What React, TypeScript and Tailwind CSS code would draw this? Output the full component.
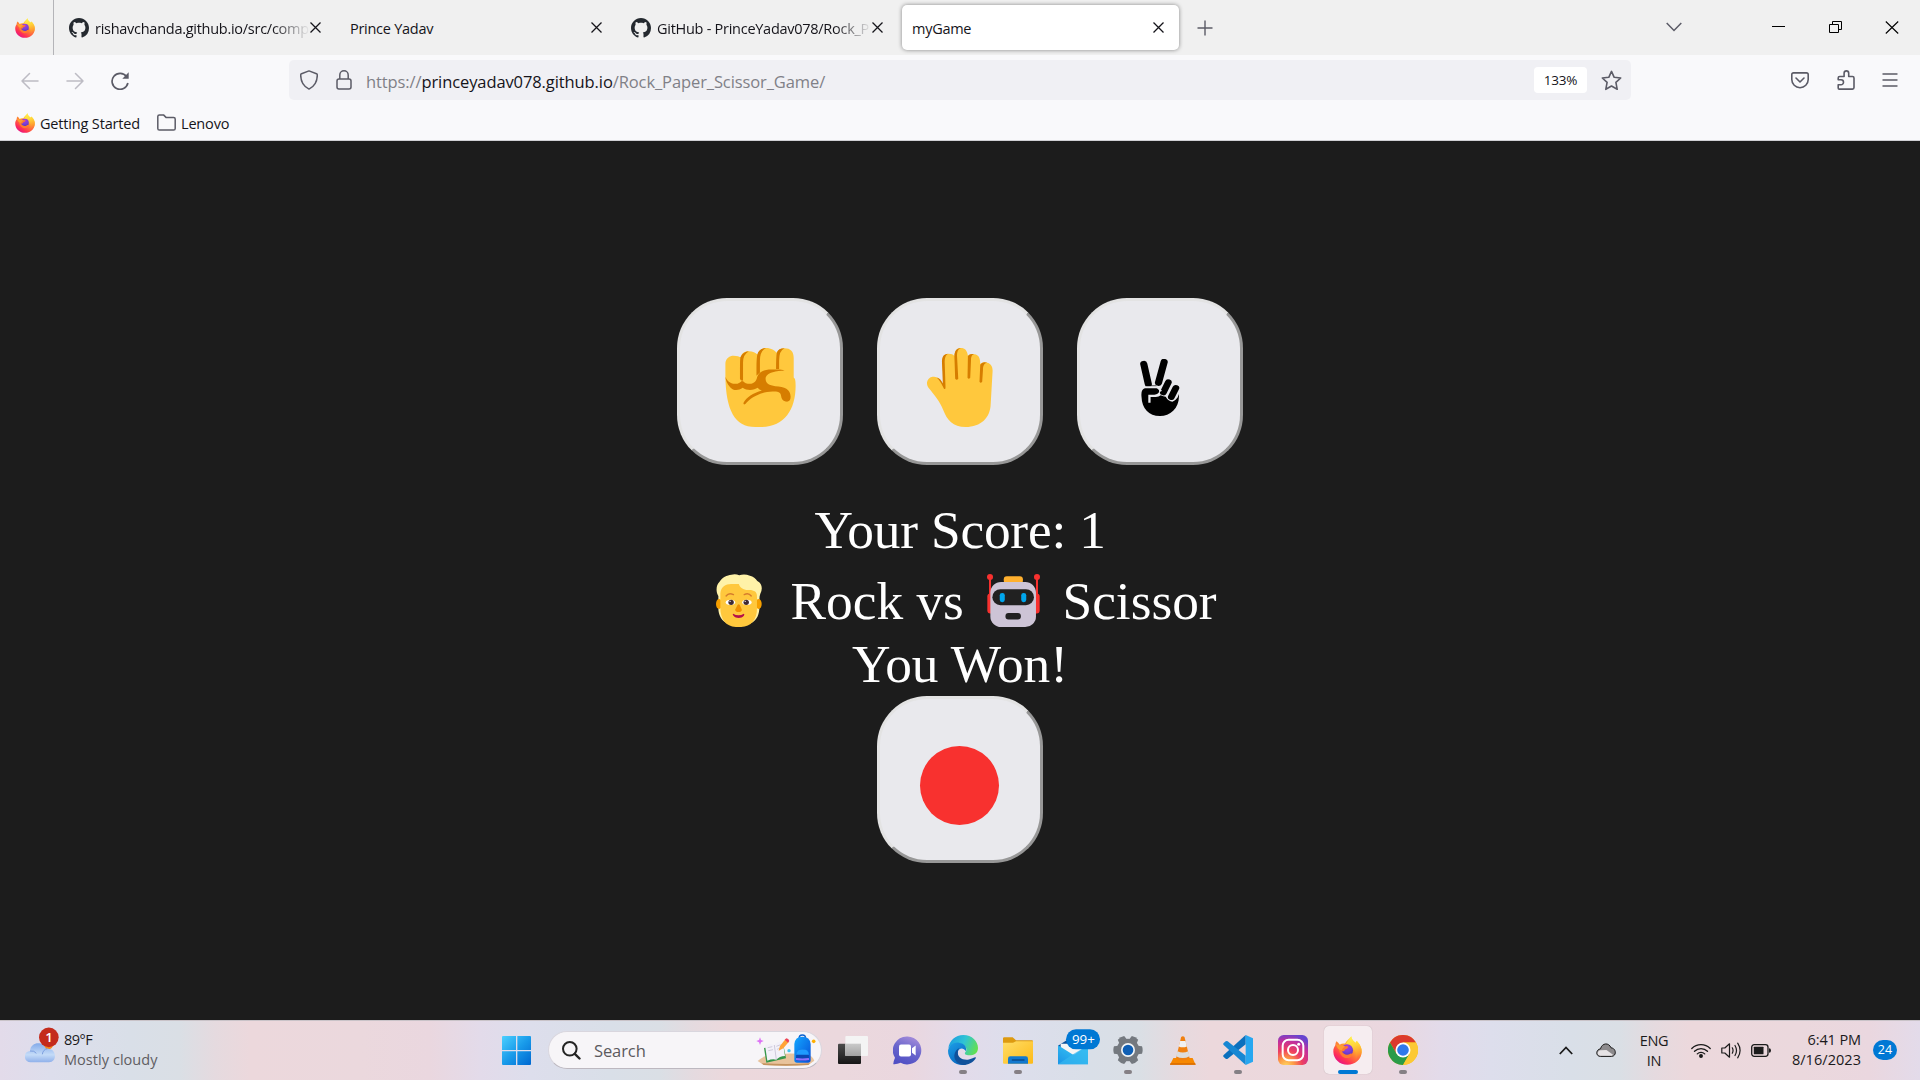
import React from "react";

const GITHUB_PATH =
  "M8 0C3.58 0 0 3.58 0 8c0 3.54 2.29 6.53 5.47 7.59.4.07.55-.17.55-.38 0-.19-.01-.82-.01-1.49-2.01.37-2.53-.49-2.69-.94-.09-.23-.48-.94-.82-1.13-.28-.15-.68-.52-.01-.53.63-.01 1.08.58 1.23.82.72 1.21 1.87.87 2.33.66.07-.52.28-.87.51-1.07-1.78-.2-3.64-.89-3.64-3.95 0-.87.31-1.59.82-2.15-.08-.2-.36-1.02.08-2.12 0 0 .67-.21 2.2.82.64-.18 1.32-.27 2-.27s1.36.09 2 .27c1.53-1.04 2.2-.82 2.2-.82.44 1.1.16 1.92.08 2.12.51.56.82 1.27.82 2.15 0 3.07-1.87 3.75-3.65 3.95.29.25.54.73.54 1.48 0 1.07-.01 1.93-.01 2.2 0 .21.15.46.55.38A8.01 8.01 0 0 0 16 8c0-4.42-3.58-8-8-8z";

function GithubIcon() {
  return (
    <svg className="h-5 w-5 shrink-0" viewBox="0 0 16 16" fill="#24292f">
      <path d={GITHUB_PATH} />
    </svg>
  );
}

function FirefoxIcon({ className }: { className: string }) {
  return (
    <svg className={className} viewBox="0 0 84 84">
      <defs>
        <linearGradient id="fxBody" x1="0.8" y1="0.1" x2="0.2" y2="0.95">
          <stop offset="0" stopColor="#fff44f" />
          <stop offset="0.3" stopColor="#ffb52c" />
          <stop offset="0.55" stopColor="#ff7139" />
          <stop offset="0.8" stopColor="#ff2f55" />
          <stop offset="1" stopColor="#e31587" />
        </linearGradient>
        <radialGradient id="fxGlobe" cx="0.5" cy="0.2" r="0.9">
          <stop offset="0" stopColor="#b13bd8" />
          <stop offset="0.5" stopColor="#7b3fd8" />
          <stop offset="1" stopColor="#4a2fb0" />
        </radialGradient>
        <linearGradient id="fxFlame" x1="0.3" y1="0" x2="0.5" y2="1">
          <stop offset="0" stopColor="#fff44f" />
          <stop offset="0.4" stopColor="#ffd338" />
          <stop offset="0.75" stopColor="#ff9a2f" />
          <stop offset="1" stopColor="#ff5a4a" />
        </linearGradient>
      </defs>
      <path
        d="M10 15C14 17 17 21 19 25C24 22 30 21 35 22C39 14 47 8 53 1C53 10 59 15 66 20C66 16 69 14 71 17C80 27 84 37 83 47C81 69 64 83 42 83C19 83 2 67 1 46C0 36 5 30 7 26C7 21 8 18 10 15Z"
        fill="url(#fxBody)"
      />
      <path
        d="M53 1C53 10 59 15 66 20C66 16 69 14 71 17C80 27 84 37 83 47C82 59 75 69 66 74C70 62 70 50 62 41C55 34 42 30 38 22C43 14 50 9 53 1Z"
        fill="url(#fxFlame)"
      />
      <circle cx="41" cy="41" r="17" fill="url(#fxGlobe)" />
      <path
        d="M18 31C23 27 29 28 34 31C38 28 42 29 44 32C43 37 37 37 34 40C34 45 29 44 26 45C30 53 40 57 49 52C54 49 58 52 55 57C48 67 30 66 23 54C17 45 15 37 18 31Z"
        fill="#ff7a2f"
      />
      <path d="M8 24C16 27 26 24 36 31C31 32 27 36 26 41C18 42 12 36 8 24Z" fill="#ff9d33" />
    </svg>
  );
}

function CloseX() {
  return (
    <svg className="h-[11px] w-[11px]" viewBox="0 0 11 11" fill="none" stroke="#15141a" strokeWidth="1.3">
      <path d="M.5 .5L10.5 10.5M10.5 .5L.5 10.5" />
    </svg>
  );
}

type TabProps = { title: string; icon?: boolean; active?: boolean };

function Tab({ title, icon, active }: TabProps) {
  return (
    <div
      className={
        "flex h-[45px] w-[277px] shrink-0 items-center rounded-[5px] pl-[10px] pr-[15px] " +
        (active ? "bg-white shadow-[0_0_4px_rgba(0,0,0,0.45)]" : "")
      }
    >
      {icon && (
        <span className="mr-[6px] flex">
          <GithubIcon />
        </span>
      )}
      <div
        className={
          "min-w-0 flex-1 whitespace-nowrap pt-[3px] text-[14.5px] leading-6 tracking-[-0.27px] text-[#15141a] " +
          (icon ? "[mask-image:linear-gradient(to_left,transparent,black_38px)]" : "")
        }
      >
        {title}
      </div>
      <CloseX />
    </div>
  );
}

function TitleBar() {
  return (
    <div className="flex h-[55px] bg-[#f0f0f0]">
      <div className="flex w-[54px] shrink-0 items-center border-r border-[#b4b4b8] pl-[15px]">
        <FirefoxIcon className="h-5 w-5" />
      </div>
      <div className="flex gap-1 pl-[5px] pt-[5px]">
        <Tab title="rishavchanda.github.io/src/comp" icon />
        <Tab title="Prince Yadav" />
        <Tab title="GitHub - PrinceYadav078/Rock_P" icon />
        <Tab title="myGame" active />
      </div>
      <svg className="ml-[18px] mt-5 h-4 w-4" viewBox="0 0 16 16" stroke="#5b5b66" strokeWidth="1.4">
        <path d="M8 .5V15.500M.5 8H15.500" />
      </svg>
      <div className="flex-1" />
      <svg className="mt-[22px] h-[10px] w-4" viewBox="0 0 16 10" fill="none" stroke="#5b5b66" strokeWidth="1.5">
        <path d="M.7 1L8 8.500L15.300 1" />
      </svg>
      <svg className="ml-[90px] mt-5 h-[13px] w-[13px]" viewBox="0 0 13 13" stroke="#000" strokeWidth="1">
        <path d="M0 6.500H13" />
      </svg>
      <svg className="ml-[44px] mt-[21px] h-[12px] w-[13px]" viewBox="0 0 13 12" fill="none" stroke="#000" strokeWidth="1">
        <path d="M.5 3.500H9.500V11.500H.5ZM3.500 3V.5H12.500V8.500H9.500" />
      </svg>
      <svg className="ml-[43px] mr-[21px] mt-[21px] h-[13px] w-[14px]" viewBox="0 0 14 13" fill="none" stroke="#000" strokeWidth="1.1">
        <path d="M.8 .5L13.200 12.500M13.200 .5L.8 12.500" />
      </svg>
    </div>
  );
}

function NavBar() {
  return (
    <div className="flex h-[50px] bg-[#f9f9fb]">
      <div className="flex h-[50px] w-[289px] shrink-0 items-center pl-[21px] pt-px">
        <svg className="h-[18px] w-[18px]" viewBox="0 0 18 18" fill="none" stroke="#bdbcc4" strokeWidth="1.5" strokeLinecap="round" strokeLinejoin="round">
          <path d="M8.500 1.500L1 9L8.500 16.500M1 9H17" />
        </svg>
        <svg className="ml-[27px] h-[18px] w-[18px]" viewBox="0 0 18 18" fill="none" stroke="#bdbcc4" strokeWidth="1.5" strokeLinecap="round" strokeLinejoin="round">
          <path d="M9.500 1.500L17 9L9.500 16.500M17 9H1" />
        </svg>
        <svg className="ml-[27px] h-[18px] w-[18px]" viewBox="0 0 18 18" fill="none" stroke="#5b5b66" strokeWidth="1.7">
          <path d="M16.900 11A8 8 0 1 1 15.500 4.500" />
          <path d="M17.700 .3V6.700H11.300Z" fill="#5b5b66" stroke="none" />
        </svg>
      </div>
      <div className="mt-[5px] flex h-10 w-[1342px] items-center rounded-[5px] bg-[#f0f0f4] pl-[11px] pr-[9px]">
        <svg className="h-5 w-[18px]" viewBox="0 0 18 20" fill="none" stroke="#5b5b66" strokeWidth="1.5" strokeLinejoin="round">
          <path d="M9 .9L16.500 3.700C17.100 4 17.300 4.300 17.300 5C17.300 12 14 16.700 9 19.100C4 16.700 .7 12 .7 5C.7 4.300 .9 4 1.500 3.700Z" />
        </svg>
        <svg className="ml-[18px] h-5 w-4" viewBox="0 0 16 20" fill="none" stroke="#5b5b66" strokeWidth="1.5">
          <rect x="1" y="9" width="14" height="10" rx="2" />
          <path d="M3.800 9V5A4.200 4.200 0 0 1 12.200 5V9" />
        </svg>
        <div className="ml-[14px] mt-[3px] whitespace-nowrap text-[16.5px] leading-6 tracking-[-0.1px] text-[#808087]">
          https://<span className="text-[#15141a]">princeyadav078.github.io</span>/Rock_Paper_Scissor_Game/
        </div>
        <div className="flex-1" />
        <div className="flex h-[26px] w-[53px] items-center justify-center rounded bg-white pt-px text-[13.500px] tracking-[-0.15px] text-[#15141a]">
          133%
        </div>
        <svg className="ml-[14px] h-[21px] w-[21px]" viewBox="0 0 21 21" fill="none" stroke="#5b5b66" strokeWidth="1.6" strokeLinejoin="round">
          <path d="M10.500 1.400L13.200 7.300L19.700 8L14.900 12.300L16.200 19.300L10.500 16L4.800 19.300L6.100 12.300L1.300 8L7.800 7.300Z" />
        </svg>
      </div>
      <div className="flex flex-1 items-center justify-end pr-[22px]">
        <svg className="h-[17px] w-[18px]" viewBox="0 0 18 17" fill="none" stroke="#5b5b66" strokeWidth="1.6" strokeLinecap="round" strokeLinejoin="round">
          <path d="M2.500 .9H15.500C16.600 .9 17.200 1.500 17.200 2.600V7.500A8.200 8.200 0 0 1 .8 7.500V2.600C.8 1.500 1.400 .9 2.500 .9ZM5 6L9 10L13 6" />
        </svg>
        <svg className="ml-[28px] h-5 w-[18px]" viewBox="0 0 18 20" fill="none" stroke="#5b5b66" strokeWidth="1.6" strokeLinejoin="round">
          <path d="M2.200 19.100H15.500Q17 19.100 17 17.600V8Q17 6.500 15.500 6.500H11.700V3.200A2.300 2.300 0 0 0 7.100 3.200V6.500H2.700Q1.200 6.500 1.200 8V9.700H4A2.500 2.500 0 0 1 4 14.700H1.200V18Q1.200 19.100 2.200 19.100Z" />
        </svg>
        <svg className="ml-[27px] h-[14px] w-4" viewBox="0 0 16 14" stroke="#5b5b66" strokeWidth="1.4" strokeLinecap="round">
          <path d="M1 1H15M1 7H15M1 13H15" />
        </svg>
      </div>
    </div>
  );
}

function BookmarksBar() {
  return (
    <div className="flex h-9 items-center border-b border-[#cfcfd3] bg-[#f9f9fb] pl-[15px] text-[14.5px] tracking-[-0.17px] text-[#15141a]">
      <FirefoxIcon className="h-5 w-5" />
      <span className="ml-[5px] w-[117px] whitespace-nowrap pt-[3px]">Getting Started</span>
      <svg className="h-[17px] w-[19px]" viewBox="0 0 19 17" fill="none" stroke="#5b5b66" strokeWidth="1.5" strokeLinejoin="round">
        <path d="M.8 2.500Q.8 .9 2.400 .9H6.500L9 3.400H16.600Q18.200 3.400 18.200 5V14.500Q18.200 16.100 16.600 16.100H2.400Q.8 16.100 .8 14.500Z" />
      </svg>
      <span className="ml-[5px] pt-[3px]">Lenovo</span>
    </div>
  );
}

function FistEmoji() {
  return (
    <svg className="mt-[11px] h-[79px] w-[71px]" viewBox="171 202 185 236" preserveAspectRatio="none">
      <path
        d="M172 250C172 232 184 225 193 225C203 225 208 228 213 230C214 216 224 212 233 212C244 212 250 217 256 222C260 208 266 202 278 202C292 202 300 210 306 216C310 206 318 203 326 203C342 203 350 213 350 232V290C354 293 355 300 355 315C355 388 325 438 265 438H250C195 438 174 385 172 290Z"
        fill="#ffc83d"
      />
      <path
        d="M211 230Q210 240 210 258V295L218 302V245Q218 222 233 212Q218 213 211 230ZM255 222Q253 235 253 260V285L262 275V240Q262 210 278 202Q259 203 255 222ZM306 216Q304 226 304 268H312V240Q312 210 326 203Q310 203 306 216ZM172 288C176 300 184 309 197 309C207 309 212 304 216 298C221 307 229 309 235 309C248 309 253 300 255 288C261 272 274 266 292 266H314Q324 267 326 270C306 270 281 275 277 290C275 306 285 314 302 316C326 317 342 325 342 348C342 360 336 364 329 362C321 361 318 354 317 345C316 333 308 331 295 332C262 333 238 350 224 369Q219 373 219 366C226 350 245 336 267 329Q260 327 256 321C248 328 229 331 217 321C205 331 192 329 185 320C176 309 173 299 172 288Z"
        fill="#d67d00"
      />
    </svg>
  );
}

function HandEmoji() {
  return (
    <svg className="mt-[11px] h-[79px] w-[66px]" viewBox="698 202 171 236" preserveAspectRatio="none">
      <path
        d="M745 322L737 250C736 228 743 219 754 219C761 219 766 221 769 226C770 209 776 202 786 202C796 202 802 209 804 225C809 220 814 219 821 221C832 223 836 232 836 250C841 244 848 244 854 246C863 248 868 257 868 270L863 370C862 410 838 438 798 438C765 438 750 417 740 387C731 360 719 345 703 322C694 310 697 292 712 288C725 285 735 296 745 322Z"
        fill="#ffc83d"
      />
      <path
        d="M754 219C739 219 736 231 737 250L739 308Q733 292 723 290Q728 294 735 308L742 324Q746 326 746 320L744 250C743 230 747 221 754 219ZM786 202C773 203 769 212 769 228L771 294Q775 299 779 294L776 230C775 211 779 205 786 202ZM804 226L803 291Q806 296 810 291L812 240C812 227 815 221 821 221Q809 218 804 226ZM836 252L834 303Q837 308 841 303L843 268C843 252 848 247 854 246Q841 241 836 252Z"
        fill="#d67d00"
      />
    </svg>
  );
}

function VictoryEmoji() {
  return (
    <svg className="mt-[12px] h-[57px] w-[40px]" viewBox="1254 237 106 171" preserveAspectRatio="none">
      <g fill="none" stroke="#000" strokeLinecap="round">
        <path d="M1264 252L1276 312M1318 246L1303 308" strokeWidth="19" />
        <path d="M1329 307L1316 337M1349 324L1337 351" strokeWidth="18" />
      </g>
      <path
        d="M1267 325H1298Q1305 327 1305 333Q1304 343 1292 344H1276V368H1282V351H1296Q1304 351 1309 346Q1316 350 1322 350Q1329 364 1340 365Q1347 364 1354 352L1357 342C1360 383 1335 408 1307 408C1277 408 1259 385 1258 350Q1256 328 1267 325Z"
        fill="#000"
      />
      <path d="M1268 318H1298" stroke="#000" strokeWidth="3" />
      <path d="M1266 321H1301L1310 334" fill="none" stroke="#e9e9ed" strokeWidth="5" />
    </svg>
  );
}

function PersonEmoji() {
  return (
    <svg className="h-[53px] w-[46px]" viewBox="50 42 137 159" preserveAspectRatio="none">
      <path
        d="M57 108C49 95 50 76 60 66C68 52 83 45 96 44Q109 41 119 46Q134 40 151 47C161 49 168 55 173 63C187 70 190 86 182 101C178 112 180 119 179 132C181 157 174 179 157 188H80C63 180 57 160 57 145Z"
        fill="#fff2a8"
      />
      <ellipse cx="59" cy="132" rx="9" ry="15" fill="#f59f00" />
      <ellipse cx="177" cy="132" rx="9" ry="15" fill="#f59f00" />
      <path
        d="M63 100C65 80 78 72 95 72H118C121 83 131 90 145 90C163 89 173 95 172 110V145C173 178 154 201 125 201H109C79 200 63 177 63 145Z"
        fill="#ffc83d"
      />
      <path d="M80 108Q88 97 102 104M134 104Q147 97 155 108" fill="none" stroke="#d67d2d" strokeWidth="4" strokeLinecap="round" />
      <ellipse cx="93" cy="127" rx="14" ry="8" fill="#fff" />
      <ellipse cx="142" cy="127" rx="14" ry="8" fill="#fff" />
      <circle cx="95" cy="127" r="8" fill="#402a32" />
      <circle cx="140" cy="127" r="8" fill="#402a32" />
      <circle cx="92" cy="124" r="2" fill="#fff" />
      <circle cx="137" cy="124" r="2" fill="#fff" />
      <path d="M114 135L107 149C107 154 112 156 117 156C123 156 127 154 127 149L121 135Q117 131 114 135Z" fill="#f09000" />
      <path d="M101 161Q117 170 133 161Q136 163 133 167C126 176 109 176 102 167Q98 163 101 161Z" fill="#b5104a" />
    </svg>
  );
}

function RobotEmoji() {
  return (
    <svg className="h-[53px] w-[53px]" viewBox="860 41 158 160" preserveAspectRatio="none">
      <g fill="#f8312f">
        <circle cx="869" cy="50" r="9" />
        <circle cx="1009" cy="50" r="9" />
        <rect x="866" y="50" width="6" height="60" />
        <rect x="1006" y="50" width="6" height="60" />
        <rect x="861" y="100" width="20" height="60" rx="9" />
        <rect x="997" y="100" width="20" height="60" rx="9" />
      </g>
      <rect x="910" y="48" width="57" height="22" rx="9" fill="#ffb02e" />
      <rect x="870" y="65" width="136" height="136" rx="32" fill="#cdc4d6" />
      <rect x="876" y="87" width="124" height="48" rx="24" fill="#212121" />
      <rect x="898" y="98" width="15" height="28" rx="7" fill="#00a6ed" />
      <rect x="962" y="98" width="15" height="28" rx="7" fill="#00a6ed" />
      <rect x="915" y="159" width="46" height="19" rx="9" fill="#212121" />
    </svg>
  );
}

function GameButton({ children }: { children: React.ReactNode }) {
  return (
    <button className="flex h-[167px] w-[166.67px] items-center justify-center rounded-[50px] border-3 border-b-[#979797] border-l-[#e3e3e3] border-r-[#979797] border-t-[#e3e3e3] bg-[#e9e9ed]">
      {children}
    </button>
  );
}

function Game() {
  return (
    <main className="flex h-[879px] flex-col items-center bg-[#1c1c1c] pt-[157px] font-['Liberation_Serif',serif] text-[53.33px] leading-[60px] text-white">
      <div className="flex gap-[33.33px]">
        <GameButton>
          <FistEmoji />
        </GameButton>
        <GameButton>
          <HandEmoji />
        </GameButton>
        <GameButton>
          <VictoryEmoji />
        </GameButton>
      </div>
      <div className="mt-[35px] h-[60px] whitespace-pre tracking-[-0.2px]">Your Score: 1</div>
      <div className="mt-[11px] flex h-[60px] w-[489px] whitespace-pre">
        <div className="w-[75px] shrink-0 pt-[3px]">
          <PersonEmoji />
        </div>
        <div className="w-[196px] shrink-0">Rock vs</div>
        <div className="w-[76px] shrink-0 pt-[3px]">
          <RobotEmoji />
        </div>
        <div>Scissor</div>
      </div>
      <div className="mt-[3px] h-[60px]">You Won!</div>
      <div className="mt-[2px]">
        <GameButton>
          <span className="mr-px mt-[11px] h-[79px] w-[79px] rounded-full bg-[#f8312f]" />
        </GameButton>
      </div>
    </main>
  );
}

function WeatherIcon() {
  return (
    <svg className="h-[36px] w-[35px]" viewBox="75 52 105 108">
      <defs>
        <linearGradient id="wCloud" x1="0" y1="0" x2="0" y2="1">
          <stop offset="0" stopColor="#84abe9" />
          <stop offset="0.6" stopColor="#c4dbf8" />
          <stop offset="1" stopColor="#8fb0ea" />
        </linearGradient>
      </defs>
      <circle cx="143" cy="103" r="17" fill="#f7861c" />
      <path d="M92 158C69 158 69 125 90 124C92 96 130 93 138 118C170 112 174 158 147 158Z" fill="url(#wCloud)" />
      <path d="M90 124Q103 122 109 131M127 134Q129 119 143 117" fill="none" stroke="#7d9fdf" strokeWidth="3" />
      <circle cx="146.500" cy="83" r="29.500" fill="#c42b1c" />
      <text x="147" y="98" textAnchor="middle" fontSize="40" fill="#fff" fontFamily="Open Sans, sans-serif" fontWeight="600">
        1
      </text>
    </svg>
  );
}

function StartIcon() {
  return (
    <svg className="h-[29px] w-[29px]" viewBox="0 0 87 87">
      <defs>
        <linearGradient id="winBlue" x1="0" y1="0" x2="1" y2="1">
          <stop offset="0" stopColor="#4cd0ff" />
          <stop offset="0.5" stopColor="#199bea" />
          <stop offset="1" stopColor="#0067d0" />
        </linearGradient>
      </defs>
      <path d="M3 0H42V42H0V3Q0 0 3 0ZM46 0H84Q87 0 87 3V42H46ZM0 46H42V87H3Q0 87 0 84ZM46 46H87V84Q87 87 84 87H46Z" fill="url(#winBlue)" />
    </svg>
  );
}

function SchoolArt() {
  return (
    <svg className="h-[32px] w-[60px]" viewBox="828 76 180 96">
      <defs>
        <linearGradient id="packBlue" x1="0" y1="0" x2="1" y2="1">
          <stop offset="0" stopColor="#13a7ff" />
          <stop offset="1" stopColor="#0750d8" />
        </linearGradient>
      </defs>
      <path d="M833 157Q846 145 866 139Q930 130 985 138Q998 143 1003 156L985 169Q918 173 851 169Z" fill="#e8c39c" />
      <path d="M851 169Q918 173 985 169L990 164Q920 168 845 164Z" fill="#c4935f" />
      <path d="M852 118L882 112L909 103L918 149L859 162Z" fill="#36964a" />
      <path d="M855 110Q870 102 883 109Q893 97 908 99L915 142Q898 143 889 153Q876 150 862 156Z" fill="#f3f1f9" />
      <path d="M883 109L889 153M863 117L877 114M865 126L879 123M889 113L902 108M891 122L904 117" stroke="#a8a3bd" strokeWidth="1.500" fill="none" />
      <path d="M896 126L900 112L916 92L926 100L910 119Z" fill="#ffa436" />
      <path d="M914 93L919 89Q926 90 928 97L924 102Z" fill="#ee4457" />
      <path d="M957 90Q957 79 967 79Q977 79 977 90" fill="none" stroke="#0a62d0" strokeWidth="4" />
      <path d="M943 106Q945 84 967 84Q990 84 992 106V154Q992 162 984 162H951Q943 162 943 154Z" fill="url(#packBlue)" />
      <path d="M948 147Q947 122 967 122Q988 122 987 147V155Q967 159 948 155Z" fill="#0b47b4" />
      <path d="M948 138Q950 122 967 122Q986 122 987 138Z" fill="#1e9bff" />
      <path d="M948 151Q967 154 987 151" stroke="#8f72ff" strokeWidth="6" fill="none" />
      <path d="M840 86L843 94L851 97L843 101L840 109L837 101L829 97L837 94Z" fill="#dd73f5" />
      <circle cx="927" cy="126" r="5" fill="#45c5ee" />
      <circle cx="1001" cy="98" r="5.500" fill="#ffb000" />
    </svg>
  );
}

function TaskViewIcon() {
  return (
    <svg className="h-[28px] w-[30px]" viewBox="0 0 90 84">
      <defs>
        <linearGradient id="tvDark" x1="0" y1="0" x2="0" y2="1">
          <stop offset="0" stopColor="#4c4c4c" />
          <stop offset="1" stopColor="#161616" />
        </linearGradient>
        <linearGradient id="tvMix" x1="0" y1="0" x2="0" y2="1">
          <stop offset="0" stopColor="#c9c9c9" />
          <stop offset="1" stopColor="#a3a3a3" />
        </linearGradient>
      </defs>
      <rect x="0" y="23" width="69" height="61" rx="3" fill="url(#tvDark)" />
      <rect x="22" y="0" width="68" height="60" rx="3" fill="#f4f4f4" />
      <path d="M22 23H69V60H22Z" fill="url(#tvMix)" />
    </svg>
  );
}

function ChatIcon() {
  return (
    <svg className="h-[29px] w-[29px]" viewBox="219 77 87 86">
      <defs>
        <linearGradient id="chatG" x1="0.8" y1="0" x2="0.4" y2="1">
          <stop offset="0" stopColor="#a98fdb" />
          <stop offset="0.5" stopColor="#6b67cd" />
          <stop offset="1" stopColor="#5150c4" />
        </linearGradient>
      </defs>
      <path d="M263 78A42 42 0 1 1 242 157Q230 162 220 161Q219 156 225 142A42 42 0 0 1 263 78Z" fill="url(#chatG)" />
      <rect x="237" y="102" width="36" height="36" rx="6" fill="#fff" />
      <path d="M276 113L287 105V135L276 127Z" fill="#fff" />
    </svg>
  );
}

function EdgeIcon() {
  return (
    <svg className="h-[30px] w-[30px]" viewBox="384 75 90 90">
      <defs>
        <linearGradient id="edgeTop" x1="0" y1="0.3" x2="1" y2="0.6">
          <stop offset="0" stopColor="#1b9de2" />
          <stop offset="0.5" stopColor="#30c4d4" />
          <stop offset="1" stopColor="#63e04f" />
        </linearGradient>
        <linearGradient id="edgeLeft" x1="0" y1="0" x2="0.6" y2="1">
          <stop offset="0" stopColor="#1da0e8" />
          <stop offset="1" stopColor="#0764bd" />
        </linearGradient>
      </defs>
      <path d="M385 115C388 92 406 75 430 75C456 75 474 94 474 114C474 130 461 136 448 136C437 136 432 132 436 127C443 118 438 104 420 101C405 99 392 104 385 115Z" fill="url(#edgeTop)" />
      <path d="M384 122C387 105 402 96 417 98C434 100 442 112 437 124C432 112 418 113 414 123C407 142 427 155 443 157C438 164 432 165 428 165C403 165 384 146 384 122Z" fill="url(#edgeLeft)" />
      <path d="M414 123C410 141 427 151 444 149C455 148 462 142 467 142Q469 143 466 147C458 158 445 165 430 165C411 164 402 149 403 136C404 126 410 117 419 114Q415 117 414 123Z" fill="#10519b" />
    </svg>
  );
}

function ExplorerIcon() {
  return (
    <svg className="h-[27px] w-[30px]" viewBox="549 80 90 81">
      <defs>
        <linearGradient id="folderG" x1="0" y1="0" x2="1" y2="1">
          <stop offset="0" stopColor="#ffdd67" />
          <stop offset="1" stopColor="#fdba18" />
        </linearGradient>
      </defs>
      <path d="M549 84Q549 81 553 81H578L588 90H636Q639 90 639 94V110H549Z" fill="#dd9a10" />
      <path d="M549 97H579L588 93H639V157Q639 160 636 160H552Q549 160 549 157Z" fill="url(#folderG)" />
      <path d="M564 160V145Q564 138 571 138H617Q624 138 624 145V160Z" fill="#1279cf" />
      <rect x="575" y="147" width="39" height="4" rx="2" fill="#0a4b8c" />
    </svg>
  );
}

function MailIcon() {
  return (
    <svg className="h-[36px] w-[42px]" viewBox="714 56 126 108">
      <defs>
        <linearGradient id="mailG" x1="0" y1="1" x2="1" y2="0">
          <stop offset="0" stopColor="#1a94e6" />
          <stop offset="1" stopColor="#3fd0f7" />
        </linearGradient>
      </defs>
      <path d="M714 106L759 78L804 106V120H714Z" fill="#0c4f99" />
      <path d="M722 100H796V125L759 140L722 117Z" fill="#f5f5f5" />
      <path d="M714 105L757 132Q764 134 770 128L804 105V162H714Z" fill="url(#mailG)" />
      <path d="M714 162L765 128L804 105V162Z" fill="#35b6f0" opacity="0.7" />
      <rect x="738" y="57" width="102" height="60" rx="30" fill="#0078d4" />
      <text x="790" y="101" textAnchor="middle" fontSize="40" fill="#fff" fontFamily="Open Sans, sans-serif">
        99+
      </text>
    </svg>
  );
}

function SettingsIcon() {
  return (
    <svg className="h-[30px] w-[30px]" viewBox="-45 -45 90 90">
      <g fill="#74797f">
        <circle r="34" />
        {[30, 90, 150, 210, 270, 330].map((a) => (
          <path key={a} d="M-13 -28L-11 -42Q0 -46 11 -42L13 -28Z" transform={`rotate(${a})`} />
        ))}
      </g>
      <circle r="21" fill="#f2f5f7" />
      <circle r="16" fill="#0f5fb4" />
    </svg>
  );
}

function VlcIcon() {
  return (
    <svg className="h-[29px] w-[26px]" viewBox="150 76 77 86">
      <path d="M160 141H217L226 161H150Z" fill="#f78800" />
      <path d="M151 157H225L226 161H150Z" fill="#d96b00" />
      <path d="M183 79Q188 74 193 79L208 141Q188 156 168 141Z" fill="#f08010" />
      <path d="M180 91H196L200 107Q188 112 176 107Z" fill="#f1f1f1" />
      <path d="M172 121Q188 129 204 121L208 136Q188 147 168 136Z" fill="#dcdcdc" />
    </svg>
  );
}

function VsCodeIcon() {
  return (
    <svg className="h-[30px] w-[30px]" viewBox="309 75 90 90">
      <path d="M377 75L311 135Q308 138 311 141L317 146Q320 148 323 146L377 103Z" fill="#0b70bd" />
      <path d="M377 165L311 105Q308 102 311 99L317 94Q320 92 323 94L377 137Z" fill="#1687d3" />
      <path d="M377 75L399 85V155L377 165Z" fill="#27a7f0" />
    </svg>
  );
}

function InstagramIcon() {
  return (
    <svg className="h-[30px] w-[30px]" viewBox="0 0 90 90">
      <defs>
        <radialGradient id="igG" cx="0.27" cy="1.05" r="1.1">
          <stop offset="0" stopColor="#ffdb62" />
          <stop offset="0.25" stopColor="#fd9a45" />
          <stop offset="0.5" stopColor="#ee3f60" />
          <stop offset="0.78" stopColor="#c22f9d" />
          <stop offset="1" stopColor="#6645cf" />
        </radialGradient>
      </defs>
      <rect width="90" height="90" rx="17" fill="url(#igG)" />
      <g fill="none" stroke="#fff" strokeWidth="6">
        <rect x="14" y="14" width="62" height="62" rx="18" />
        <circle cx="45" cy="45" r="15" />
      </g>
      <circle cx="62" cy="28" r="4.500" fill="#fff" />
    </svg>
  );
}

function ChromeIcon() {
  return (
    <svg className="h-[30px] w-[30px]" viewBox="-45 -45 90 90">
      <circle r="45" fill="#fbbc05" />
      <path d="M-39 -22.500A45 45 0 0 1 39 -22.500L0 -22.500L-19.500 11.250Z" fill="#dc3a2d" />
      <path d="M-39 -22.500A45 45 0 0 0 0 45L19.500 11.250L-19.500 11.250Z" fill="#2a9b48" />
      <path d="M0 -22.500H39A45 45 0 0 1 0 45L19.500 11.250Z" fill="#fcc934" />
      <circle r="22.500" fill="#fff" />
      <circle r="17.500" fill="#3079ec" />
    </svg>
  );
}

type AppSlotProps = { children: React.ReactNode; running?: boolean; active?: boolean };

function AppSlot({ children, running, active }: AppSlotProps) {
  return (
    <div
      className={
        "relative flex h-12 w-12 shrink-0 items-center justify-center rounded-[5px] " +
        (active ? "bg-[#f6edf0] shadow-[0_0_1px_rgba(0,0,0,0.25)]" : "")
      }
    >
      {children}
      {running && <span className="absolute bottom-0 left-5 h-1 w-2 rounded-full bg-[#858085]" />}
      {active && <span className="absolute bottom-0 left-[14px] h-1 w-5 rounded-full bg-[#0078d4]" />}
    </div>
  );
}

function SystemTray() {
  return (
    <div className="flex h-[60px] items-center text-[14.5px] leading-5 text-[#1b1a1c]">
      <svg className="h-[9px] w-[14px]" viewBox="0 0 14 9" fill="none" stroke="#1b1b1b" strokeWidth="1.8">
        <path d="M.8 8L7 1.500L13.200 8" />
      </svg>
      <svg className="-mt-px ml-[23px] h-[14px] w-5" viewBox="0 0 20 14">
        <path d="M4.500 13.400C-.5 13.400 -.4 6.500 4.500 5.800C6 -.3 13 -.7 15 4.800C20.500 5.200 20.800 13.400 15.500 13.400Z" fill="#8d8b8d" stroke="#1b1b1b" strokeWidth="1" />
        <path d="M4.500 12.700C1 12.700 .5 8.600 4 7.300L10.500 7L17 11.800Q16.300 12.700 15.500 12.700Z" fill="#e6e3e5" />
      </svg>
      <div className="ml-[22px] mt-[2px] w-[32px] whitespace-nowrap text-center tracking-[-0.35px]">
        <div>ENG</div>
        <div>IN</div>
      </div>
      <svg className="ml-[21px] h-[15px] w-5" viewBox="0 0 20 15" fill="none" stroke="#1b1b1b" strokeWidth="1.3" strokeLinecap="round">
        <path d="M.8 5.500A13 13 0 0 1 19.200 5.500M3.500 8.300A9.200 9.200 0 0 1 16.500 8.300M6.300 10.900A5.300 5.300 0 0 1 13.700 10.900" />
        <circle cx="10" cy="13" r="1.300" fill="#1b1b1b" />
      </svg>
      <svg className="ml-[10px] h-[17px] w-5" viewBox="0 0 20 17" fill="none" stroke="#1b1b1b" strokeWidth="1.200" strokeLinejoin="round" strokeLinecap="round">
        <path d="M.8 6V11H3.800L8.500 15.200V1.800L3.800 6ZM11.300 5.800Q12.800 8.500 11.300 11.200M14 3.500Q17 8.500 14 13.500M16.700 1.200Q21.500 8.500 16.700 15.800" />
      </svg>
      <svg className="ml-[10px] h-[13px] w-5" viewBox="0 0 20 13">
        <rect x=".7" y=".7" width="16.300" height="11.600" rx="2.500" fill="none" stroke="#1b1b1b" strokeWidth="1.300" />
        <rect x="2.800" y="2.800" width="9.700" height="7.400" rx="0.500" fill="#1b1b1b" />
        <path d="M18 4.300Q20 4.300 20 6.500T18 8.700Z" fill="#1b1b1b" />
      </svg>
      <div className="ml-[10px] w-[80px] whitespace-nowrap text-right tracking-[0.05px]">
        <div className="tracking-[-0.1px]">6:41 PM</div>
        <div>8/16/2023</div>
      </div>
      <div className="ml-[12px] mr-[23px] flex h-5 w-6 items-center justify-center rounded-full bg-[#0078d4] text-[12.5px] text-white">
        24
      </div>
    </div>
  );
}

function Taskbar() {
  return (
    <footer className="flex h-[60px] border-t border-[#c9c3c8] bg-[repeating-linear-gradient(90deg,#e3dbea_0px,#dddeec_50px,#d9dfe8_130px,#dadfe5_180px,#e5dadf_215px,#ecd8dc_250px,#ebd8dd_360px,#ead7df_430px,#e3dbea_480px)]">
      <div className="-mt-px flex h-[60px] w-[499px] shrink-0 pl-[25px] pt-[7px]">
        <WeatherIcon />
        <div className="ml-[4px] pt-[3px] text-[14.5px] leading-5">
          <div className="tracking-[-0.5px] text-[#1b1a1c]">89°F</div>
          <div className="tracking-[0.05px] text-[#5f5d62]">Mostly cloudy</div>
        </div>
      </div>
      <div className="-mt-px flex h-[60px] shrink-0 items-center">
        <div className="flex w-[49px] pl-[3px]">
          <StartIcon />
        </div>
        <div className="flex h-[38px] w-[274px] items-center rounded-full border border-b-[#bdb8c0] border-l-[#d9d6de] border-r-[#d9d6de] border-t-[#d9d6de] bg-[#f7f5f8] pl-[13px]">
          <svg className="h-[19px] w-[19px]" viewBox="0 0 19 19" fill="none" stroke="#242424" strokeWidth="2" strokeLinecap="round">
            <circle cx="7.800" cy="7.800" r="6.800" />
            <path d="M12.800 12.800L17.500 17.500" strokeWidth="2.400" />
          </svg>
          <span className="ml-[13px] mt-[2px] w-[162px] text-[16.5px] tracking-[-0.1px] text-[#5c5a5e]">Search</span>
          <SchoolArt />
        </div>
        <div className="ml-[7px] flex gap-[7px]">
          <AppSlot>
            <TaskViewIcon />
          </AppSlot>
          <AppSlot>
            <span className="-ml-px">
              <ChatIcon />
            </span>
          </AppSlot>
          <AppSlot running>
            <EdgeIcon />
          </AppSlot>
          <AppSlot running>
            <ExplorerIcon />
          </AppSlot>
          <AppSlot>
            <span className="-mt-[7px] ml-[12px]">
              <MailIcon />
            </span>
          </AppSlot>
          <AppSlot running>
            <SettingsIcon />
          </AppSlot>
          <AppSlot>
            <VlcIcon />
          </AppSlot>
          <AppSlot running>
            <VsCodeIcon />
          </AppSlot>
          <AppSlot>
            <InstagramIcon />
          </AppSlot>
          <AppSlot active>
            <FirefoxIcon className="mr-px h-[29px] w-[29px]" />
          </AppSlot>
          <AppSlot running>
            <ChromeIcon />
          </AppSlot>
        </div>
      </div>
      <div className="flex-1" />
      <div className="-mt-px">
        <SystemTray />
      </div>
    </footer>
  );
}

export default function App() {
  return (
    <div className="h-[1080px] w-[1920px] overflow-hidden font-['Open_Sans',sans-serif]">
      <TitleBar />
      <NavBar />
      <BookmarksBar />
      <Game />
      <Taskbar />
    </div>
  );
}
